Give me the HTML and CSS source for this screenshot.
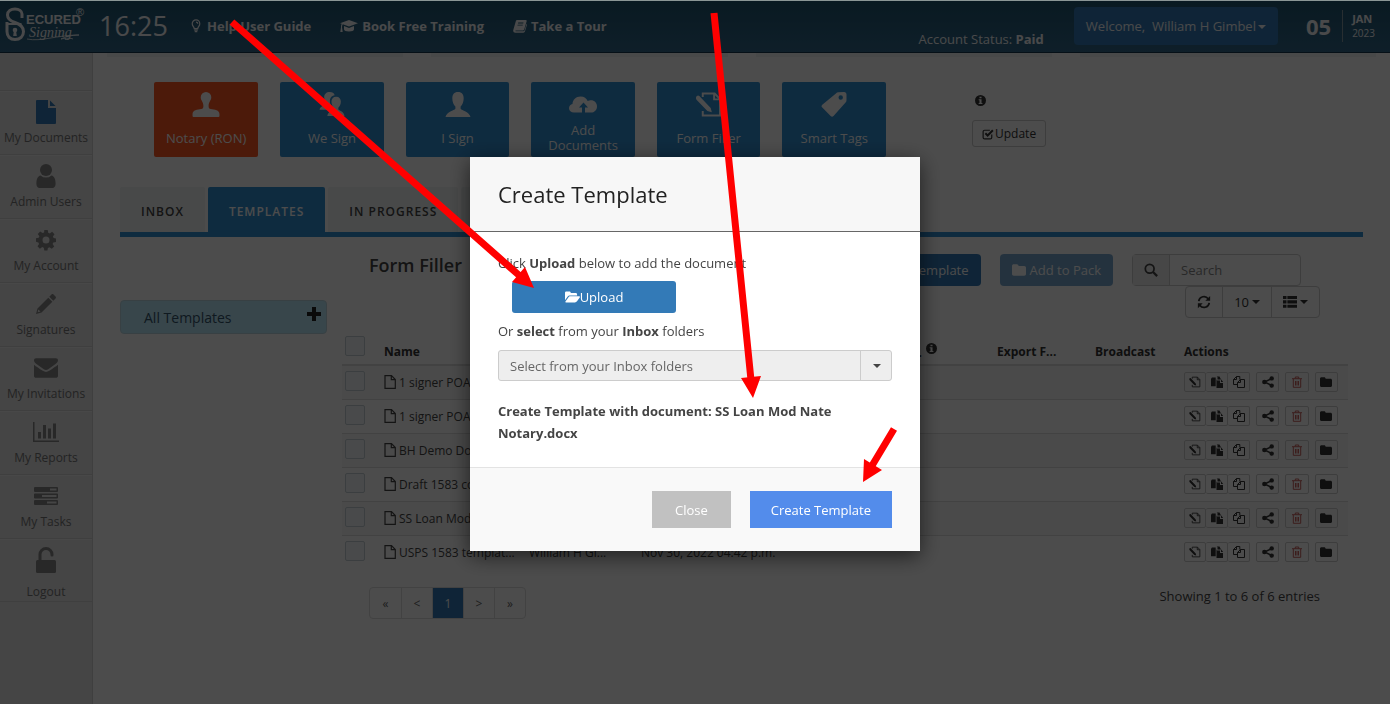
FILE: index.html
```html
<!DOCTYPE html>
<html lang="en">
<head>
  <meta charset="UTF-8" />
  <title>Secured Signing - Form Filler</title>
  <link rel="stylesheet" href="styles.css">
</head>
<body>

  <!-- icon sprite -->
  <svg class="sprite" aria-hidden="true">
    <symbol id="i-bulb" viewBox="0 0 16 16"><path d="M6 11c0-2-2.300-2.800-2.300-5.700a4.300 4.300 0 0 1 8.600 0C12.300 8.200 10 9 10 11zM6 12.700h4M6.500 14.500h3M8 3.500c1.300 0 2 .7 2 1.800" fill="none" stroke="currentColor" stroke-width="1.400"/></symbol>
    <symbol id="i-cap" viewBox="0 0 18 16"><path d="M9 2l9 3.200-9 3.300L2.800 6.200c-.6.700-.8 1.700-.8 3l.7 4.800H.3L1 9.200c0-1.600.2-2.700.8-3.500L0 5.200z"/><path d="M4 8l5 1.900L14 8v3.200c0 1.300-2.200 2.300-5 2.300s-5-1-5-2.300z"/></symbol>
    <symbol id="i-book" viewBox="0 0 16 16"><path d="M5 1h9.500c1 0 1.400.7 1.100 1.600l-2.800 9.300c-.3.800-.8 1.100-1.600 1.100H3.400c-1 0-1.200.8-.2 1.100h8.800c.7 0 1-.3 1.200-.9l2.300-7.700c.5.400.5.900.3 1.600l-2.100 7c-.3 1-.9 1.500-1.900 1.500H2.700C.9 15.600-.2 14 .4 12.400L3.200 2.500C3.500 1.500 4 1 5 1zm1 3l-.3 1h6l.3-1zm-.7 2.500L5 7.500h6l.3-1z" fill-rule="evenodd"/></symbol>
    <symbol id="i-file" viewBox="0 0 20 24"><path d="M1 0h11v8h8v15a1 1 0 0 1-1 1H1a1 1 0 0 1-1-1V1a1 1 0 0 1 1-1z"/><path d="M14 .5L19.500 6H14z"/></symbol>
    <symbol id="i-user" viewBox="0 0 16 20"><circle cx="8" cy="5" r="5"/><path d="M3.500 9.500a6.500 6.500 0 0 0 9 0C15 10 16 12.500 16 16.500c0 2-1 3.500-2.800 3.500H2.800C1 20 0 18.500 0 16.500c0-4 1-6.500 3.500-7z"/></symbol>
    <symbol id="i-cog" viewBox="0 0 20 20"><path fill-rule="evenodd" d="M8.300 0h3.400l.5 2.700 1.600.7L16.100 1.800l2.400 2.400-1.600 2.300.7 1.600 2.400.5v3.400l-2.700.5-.7 1.600 1.600 2.300-2.400 2.400-2.300-1.600-1.600.7-.5 2.600H8.300l-.5-2.700-1.600-.7-2.300 1.600-2.400-2.400 1.600-2.300-.7-1.600L0 11.700V8.300l2.700-.5.700-1.600L1.800 3.900l2.400-2.400 2.300 1.600 1.600-.7zM10 6.500a3.500 3.500 0 1 0 0 7 3.500 3.500 0 0 0 0-7z"/></symbol>
    <symbol id="i-pencil" viewBox="0 0 20 20"><path d="M15.500.5c.6-.6 1.400-.6 2 0l2 2c.6.600.6 1.400 0 2L17.300 6.700l-4-4zM12.300 3.700l4 4L5.500 18.500 0 20l1.500-5.500zM2.300 15.500l-.6 2.800 2.800-.7z" fill-rule="evenodd"/></symbol>
    <symbol id="i-mail" viewBox="0 0 22 18"><path d="M2 0h18c1.200 0 2 .8 2 2 0 1.400-1 2.400-2 3.200l-7 4.900c-1.500 1-2.500 1-4 0L2 5.200C1 4.500 0 3.400 0 2 0 .8.800 0 2 0z"/><path d="M0 6c.5.500 1 1 8 5.600 2 1.300 4 1.300 6 0C21 7 21.500 6.500 22 6v10c0 1.200-.8 2-2 2H2c-1.200 0-2-.8-2-2z"/></symbol>
    <symbol id="i-chart" viewBox="0 0 26 20"><path d="M0 0h1.500v18.500H26V20H0zM5 10h3v6.500H5zM10 3h3v13.500h-3zM15 6.500h3v10h-3zM20 1.500h3v15h-3z"/></symbol>
    <symbol id="i-tasks" viewBox="0 0 24 18"><path fill-rule="evenodd" d="M1 0h22a1 1 0 0 1 1 1v3a1 1 0 0 1-1 1H1a1 1 0 0 1-1-1V1a1 1 0 0 1 1-1zm15 1.500v2h6.500v-2zM1 6.500h22a1 1 0 0 1 1 1v3a1 1 0 0 1-1 1H1a1 1 0 0 1-1-1v-3a1 1 0 0 1 1-1zM8 8v2h14.500V8zM1 13h22a1 1 0 0 1 1 1v3a1 1 0 0 1-1 1H1a1 1 0 0 1-1-1v-3a1 1 0 0 1 1-1zm12 1.500v2h9.500v-2z"/></symbol>
    <symbol id="i-unlock" viewBox="0 0 20 26"><path d="M4 14V7.500a6 6 0 0 1 12 0V8" fill="none" stroke="currentColor" stroke-width="3" stroke-linecap="round"/><rect y="13" width="20" height="13" rx="1.500"/></symbol>
    <symbol id="i-stamp" viewBox="0 0 28 26"><path d="M14 0a5.500 5.500 0 0 1 5.500 5.500c0 3.500-2.800 4.500-2.800 9 0 2 .6 3 2.300 3.300 4 .5 9 1.200 9 5.200v2a1 1 0 0 1-1 1H1a1 1 0 0 1-1-1v-2c0-4 5-4.700 9-5.200 1.700-.3 2.300-1.300 2.300-3.300 0-4.500-2.800-5.500-2.800-9A5.500 5.500 0 0 1 14 0z"/></symbol>
    <symbol id="i-person" viewBox="0 0 22 22"><path d="M11 0c3.500 0 5 2.300 5 5.500 0 3-1 5.800-2.700 7.200v2c1 1.500 7.700 2.600 8.700 7.300H0c1-4.700 7.700-5.800 8.700-7.300v-2C7 11.300 6 8.500 6 5.500 6 2.300 7.500 0 11 0z"/></symbol>
    <symbol id="i-people" viewBox="0 0 24 24"><path d="M10 0c2.300 0 4 1 4.600 3-3.200.4-4.800 3-4.600 6 .1 2 .8 4 1.800 5.300-1 1-4 1.700-5.300 2.700H0c.6-3.600 5-4.200 6.500-5.500v-1.800C5.200 8.500 4.500 6.800 4.500 5 4.500 2 6.500 0 10 0z"/><path d="M16 4.500c3 0 4.500 2 4.500 4.600 0 2.500-1 4.700-2.400 6v1.800c1.300 1.300 5.300 2 5.900 6.100H7.500c.6-4.100 5-4.800 6.300-6.100v-1.800c-1.400-1.300-2.300-3.500-2.300-6 0-2.600 1.500-4.600 4.500-4.600z"/></symbol>
    <symbol id="i-cloud" viewBox="0 0 28 16"><path fill-rule="evenodd" d="M5 16c-3 0-5-2-5-4.300C0 9.500 1.400 8 3.500 7.500 3.500 3.500 7 0 11.500 0c3.700 0 6 1.800 7.200 4.600C19.700 4 20.600 3.800 22 3.800c3.500 0 6 2.600 6 6.100 0 3.400-2.600 6.100-6 6.100h-6v-5h3l-4.500-5-4.500 5h3v5z"/></symbol>
    <symbol id="i-form" viewBox="0 0 24 22"><path d="M6.500 4.500V1.300H17l4.700 4.900v14.500H6.500v-4M16.500 1.500v5h5" fill="none" stroke="currentColor" stroke-width="1.700"/><path d="M1.300 3.600c.7-.7 1.500-.7 2.200 0L13.500 14l1 3.800-3.900-1L1 6.800c-.7-.8-.6-2.300.3-3.200z"/></symbol>
    <symbol id="i-tag" viewBox="0 0 26 26"><path fill-rule="evenodd" d="M15 1.500c.7-.8 1.500-1.200 2.500-1.200l6-.3c1.500 0 2.500 1 2.500 2.500v6c0 1-.4 2-1.200 2.800L12.500 25c-1 1-2 1-3 0L.8 16.200c-1-1-1-2 0-3zM20 3.500a2.300 2.300 0 1 0 0 4.600 2.300 2.300 0 0 0 0-4.600z"/></symbol>
    <symbol id="i-info" viewBox="0 0 16 16"><path fill-rule="evenodd" d="M8 0a8 8 0 1 1 0 16A8 8 0 0 1 8 0zM6.500 2.500v2.300h3V2.500zM5.300 6v1.500h1.200v4H5.300V13h5.500v-1.500H9.500V6z"/></symbol>
    <symbol id="i-check" viewBox="0 0 16 16"><path d="M13 8.500v4a2 2 0 0 1-2 2H3.500a2 2 0 0 1-2-2V5a2 2 0 0 1 2-2h7" fill="none" stroke="currentColor" stroke-width="1.600"/><path d="M4.500 7l3 3L14.500 3" fill="none" stroke="currentColor" stroke-width="2.600"/></symbol>
    <symbol id="i-open" viewBox="0 0 18 14"><path d="M0 11V2C0 .8.800.300 1.700.300h3.600c1 0 1.700.7 1.700 1.900h5.800c1 0 1.700.7 1.700 1.700v1.300H6C4.600 5.200 3.700 5.700 3 6.600z"/><path d="M6 6.200h11c1 0 1.200.6.700 1.300l-3.300 4.700c-.6.800-1.500 1.300-2.500 1.300H1.300c-1 0-1.200-.6-.7-1.200L4 7.500c.5-.8 1.200-1.300 2-1.300z"/></symbol>
    <symbol id="i-folder" viewBox="0 0 16 14"><path d="M0 11.500v-9C0 1.200.900.500 2 .5h3.500c1.200 0 2 .8 2 2H14c1.200 0 2 .8 2 2v7c0 1.200-.8 2-2 2H2c-1.200 0-2-.8-2-2z"/></symbol>
    <symbol id="i-search" viewBox="0 0 16 16"><circle cx="6.500" cy="6.500" r="5" fill="none" stroke="currentColor" stroke-width="2"/><path d="M10.300 10.300l4.700 4.700" stroke="currentColor" stroke-width="2.600"/></symbol>
    <symbol id="i-refresh" viewBox="0 0 16 16"><path d="M2 7a6 6 0 0 1 10.800-2.700M14 9a6 6 0 0 1-10.800 2.700" fill="none" stroke="currentColor" stroke-width="2"/><path d="M15 1v5.500H9.500zM1 15V9.500h5.500z"/></symbol>
    <symbol id="i-list" viewBox="0 0 16 14"><path d="M0 0h4v3.600H0zM5 0h11v3.600H5zM0 5h4v3.600H0zM5 5h11v3.600H5zM0 10h4v3.600H0zM5 10h11v3.600H5z"/></symbol>
    <symbol id="i-share" viewBox="0 0 12 12"><path d="M10 2.300L2.500 6 10 9.700" fill="none" stroke="currentColor" stroke-width="1.500"/><circle cx="9.700" cy="2.400" r="2.200"/><circle cx="2.400" cy="6" r="2.300"/><circle cx="9.700" cy="9.600" r="2.200"/></symbol>
    <symbol id="i-trash" viewBox="0 0 12 12"><path d="M1 2.700h10M2.300 3v8.300h7.400V3M4.300 2.500V1h3.400v1.500M4.500 5v4.500M6 5v4.500M7.500 5v4.500" fill="none" stroke="currentColor"/></symbol>
    <symbol id="i-paste" viewBox="0 0 12 12"><path d="M0 2.500L1 1.500h3.700v8.800H0z"/><path d="M5.500 0h1v3.500H10L8.500.5H7zM5.500 3L6 4.500h3V7h3v5H5.500zM10 3.200L12.300 6H10z"/></symbol>
    <symbol id="i-copy" viewBox="0 0 12 12"><path d="M4.500 8.500h-4v-5l3-3h3.300v3M3.500.5v3h-3M7.500 3.500h4v8h-7v-5zM7.500 3.500v3h-3" fill="none" stroke="currentColor"/></symbol>
    <symbol id="i-page" viewBox="0 0 12 14"><path d="M1 .7h6.500L11.300 4.500v8.800H1zM7.300.7v4h4" fill="none" stroke="currentColor" stroke-width="1.200"/></symbol>
    <symbol id="i-plus" viewBox="0 0 14 14"><path d="M5 0h4v5h5v4H9v5H5V9H0V5h5z"/></symbol>
  </svg>

  <header class="topbar">
    <a class="logo" href="#" aria-label="Secured Signing">
      <svg viewBox="0 0 80 38">
        <path d="M17 11V7c0-3-3-5-7-5S2.500 4 2.500 8s3 6 7.500 7.500 8.500 4 8.500 9-3.500 8-8.500 8-8-3-8-8V15" fill="none" stroke="currentColor" stroke-width="3"/>
        <path d="M2.500 17h14" stroke="currentColor" stroke-width="2"/>
        <circle cx="10" cy="23" r="2.300"/><path d="M9 23h2l.8 6H8.200z"/>
        <text class="logo-name" x="21" y="17">ECURED</text>
        <text class="logo-script" x="24" y="30">Signing</text>
        <text class="logo-reg" x="71" y="9">®</text>
        <path d="M22 32c14 3 30-4 52-4-8 0-14 2-18 4 5-1 10-1 12 0" fill="none" stroke="currentColor" stroke-width=".8"/>
      </svg>
    </a>
    <div class="clock">16:25</div>
    <nav class="toplinks">
      <a href="#"><svg class="ic14"><use href="#i-bulb"/></svg>Help User Guide</a>
      <a href="#"><svg class="ic18"><use href="#i-cap"/></svg>Book Free Training</a>
      <a href="#"><svg class="ic14"><use href="#i-book"/></svg>Take a Tour</a>
    </nav>
    <div class="status">Account Status: <b>Paid</b></div>
    <button class="welcome">Welcome,&nbsp; William H Gimbel<span class="caret"></span></button>
    <div class="date">
      <span class="day">05</span>
      <span class="month"><b>JAN</b><span>2023</span></span>
    </div>
  </header>

  <div class="layout">
    <nav class="sidebar">
      <a class="current" href="#"><svg class="w20"><use href="#i-file"/></svg>My Documents</a>
      <a href="#"><svg class="w20"><use href="#i-user"/></svg>Admin Users</a>
      <a href="#"><svg class="w20"><use href="#i-cog"/></svg>My Account</a>
      <a href="#"><svg class="w20"><use href="#i-pencil"/></svg>Signatures</a>
      <a href="#"><svg class="w24"><use href="#i-mail"/></svg>My Invitations</a>
      <a href="#"><svg class="w26"><use href="#i-chart"/></svg>My Reports</a>
      <a href="#"><svg class="w24"><use href="#i-tasks"/></svg>My Tasks</a>
      <a class="logout" href="#"><svg class="w26"><use href="#i-unlock"/></svg>Logout</a>
    </nav>

    <main class="main">
      <div class="strips"><span></span><span></span><span></span><span></span></div>

      <div class="launch">
        <div class="tiles">
          <button class="tile notary"><svg><use href="#i-stamp"/></svg><span>Notary (RON)</span></button>
          <button class="tile"><svg><use href="#i-people"/></svg><span>We Sign</span></button>
          <button class="tile"><svg><use href="#i-person"/></svg><span>I Sign</span></button>
          <button class="tile"><svg><use href="#i-cloud"/></svg><span>Add Documents</span></button>
          <button class="tile"><svg><use href="#i-form"/></svg><span>Form Filler</span></button>
          <button class="tile"><svg><use href="#i-tag"/></svg><span>Smart Tags</span></button>
        </div>
        <div class="update">
          <svg class="ic10"><use href="#i-info"/></svg>
          <button class="btn-small"><svg class="ic12"><use href="#i-check"/></svg>Update</button>
        </div>
      </div>

      <div class="tabs">
        <button>INBOX</button>
        <button class="active">TEMPLATES</button>
        <button>IN PROGRESS</button>
        <button>COMPLETED</button>
      </div>

      <div class="content">
        <aside class="folders">
          <a href="#">All Templates</a>
          <button aria-label="Add folder"><svg class="ic14"><use href="#i-plus"/></svg></button>
        </aside>

        <section class="panel">
          <div class="toolbar">
            <h2>Form Filler</h2>
            <button class="btn">Create Template</button>
            <button class="btn" disabled><svg class="ic14"><use href="#i-folder"/></svg>Add to Pack</button>
            <div class="search">
              <label for="search"><svg class="ic14"><use href="#i-search"/></svg></label>
              <input id="search" type="text" placeholder="Search">
            </div>
          </div>
          <div class="viewopts">
            <button aria-label="Refresh"><svg class="ic14"><use href="#i-refresh"/></svg></button>
            <button>10<span class="caret"></span></button>
            <button aria-label="Columns"><svg class="ic14"><use href="#i-list"/></svg><span class="caret"></span></button>
          </div>

          <table>
            <thead>
              <tr>
                <th class="c-check"><input type="checkbox" aria-label="Select all"></th>
                <th class="c-name">Name</th>
                <th class="c-owner">Owner</th>
                <th class="c-date">Created</th>
                <th class="c-link">Form L...<svg class="ic10"><use href="#i-info"/></svg></th>
                <th class="c-export">Export F...</th>
                <th class="c-cast">Broadcast</th>
                <th class="c-actions">Actions</th>
              </tr>
            </thead>
            <tbody id="rows"></tbody>
          </table>

          <div class="tablefoot">
            <div class="pages">
              <a href="#">«</a><a href="#">&lt;</a><a class="active" href="#">1</a><a href="#">&gt;</a><a href="#">»</a>
            </div>
            <div class="count">Showing 1 to 6 of 6 entries</div>
          </div>
        </section>
      </div>
    </main>
  </div>

  <div class="backdrop">
    <div class="modal" role="dialog" aria-labelledby="modal-title">
      <div class="modal-head"><h3 id="modal-title">Create Template</h3></div>
      <div class="modal-body">
        <p>Click <b>Upload</b> below to add the document</p>
        <button class="upload"><svg><use href="#i-open"/></svg>Upload</button>
        <p><label for="inbox">Or <b>select</b> from your <b>Inbox</b> folders</label></p>
        <div class="picker">
          <select id="inbox"><option>Select from your Inbox folders</option></select>
          <span class="picker-arrow"><span class="caret"></span></span>
        </div>
        <p class="chosen">Create Template with document: SS Loan Mod Nate Notary.docx</p>
      </div>
      <div class="modal-foot">
        <button class="close">Close</button>
        <button class="create">Create Template</button>
      </div>
    </div>
  </div>

  <!-- guide arrows -->
  <svg class="arrows" viewBox="0 0 1390 704" aria-hidden="true">
    <path class="shaft" d="M232 22L521 277M714 13L751 380M894 429L870 469"/>
    <path d="M534 288l-22-6 13-15zM753 398l-12-20 20-2zM863 482l1-23 18 11z"/>
  </svg>

  <script>
    const docs = [
      { name: '1 signer POA', owner: '', date: '' },
      { name: '1 signer POA', owner: '', date: '' },
      { name: 'BH Demo Doc', owner: '', date: '' },
      { name: 'Draft 1583 co', owner: '', date: '' },
      { name: 'SS Loan Mod', owner: '', date: '' },
      { name: 'USPS 1583 templat...', owner: 'William H Gi...', date: 'Nov 30, 2022 04:42 p.m.' }
    ];

    const action = (icon, label, cls = '') =>
      `<button class="${cls}" aria-label="${label}"><svg class="ic12"><use href="#i-${icon}"/></svg></button>`;

    document.getElementById('rows').innerHTML = docs.map(d => `
      <tr>
        <td class="c-check"><input type="checkbox" aria-label="Select ${d.name}"></td>
        <td class="c-name"><svg class="page"><use href="#i-page"/></svg>${d.name}</td>
        <td>${d.owner}</td>
        <td>${d.date}</td>
        <td></td><td></td><td></td>
        <td>
          <div class="actions">
            <div class="group">${action('form', 'Edit')}${action('paste', 'Use')}${action('copy', 'Copy')}</div>
            ${action('share', 'Share')}${action('trash', 'Delete', 'danger')}${action('folder', 'Move')}
          </div>
        </td>
      </tr>`).join('');
  </script>

</body>
</html>
```

FILE: styles.css
```css
* { box-sizing: border-box; }
html, body { height: 100%; }
body {
  margin: 0;
  border-top: 1px solid #8b9696;
  background: #fff; color: #444;
  font-family: "Open Sans", "Noto Sans", sans-serif;
  font-size: 13px;
  display: flex; flex-direction: column;
  overflow: hidden;
}
button, input, select { font: inherit; color: inherit; margin: 0; padding: 0; }
button { background: none; border: 0; cursor: pointer; }
a { color: inherit; text-decoration: none; }
svg { fill: currentColor; flex: none; }
.sprite { position: absolute; width: 0; height: 0; }
.ic10 { width: 11px; height: 11px; }
.ic12 { width: 12px; height: 12px; }
.ic14 { width: 14px; height: 14px; }
.ic18 { width: 18px; height: 16px; }
.caret {
  display: inline-block; margin-left: 2px; vertical-align: middle;
  border: 4px solid transparent; border-top-color: currentColor; border-bottom: 0;
}

/* top bar */
.topbar {
  height: 52px; flex: none;
  display: flex; align-items: center;
  padding: 0 15px 2px 5px;
  background: linear-gradient(#205672, #32688a);
  border-bottom: 1px solid #14384e;
  color: #f4f6f8;
}
.logo { width: 80px; height: 38px; }
.logo svg { width: 80px; height: 38px; display: block; }
.logo-name { font: bold 13px "Liberation Sans", sans-serif; }
.logo-script { font: italic 14px "Liberation Serif", serif; }
.logo-reg { font: 11px "Liberation Sans", sans-serif; }
.clock { margin-left: 14px; width: 70px; font-size: 27px; }
.toplinks { display: flex; gap: 29px; margin-left: 20px; font-weight: 700; }
.toplinks a { display: flex; align-items: center; gap: 4px; white-space: nowrap; }
.status { margin: 26px 30px 0 auto; white-space: nowrap; }
.welcome {
  height: 38px; padding: 0 12px; border-radius: 4px;
  background: #337ab7; white-space: nowrap;
}
.date { display: flex; align-items: center; margin-left: 28px; }
.day { font-size: 22px; font-weight: 700; }
.month {
  display: flex; flex-direction: column; justify-content: center;
  height: 32px; margin-left: 11px; padding-left: 9px;
  border-left: 1px solid #8899a3;
  font-size: 10px; line-height: 15px;
}
.month b { font-size: 11px; }

.layout { flex: 1; display: flex; min-height: 0; }

/* sidebar */
.sidebar {
  width: 93px; flex: none; padding-top: 37px;
  background: #e6e6e6; border-right: 1px solid #d2d2d2;
  color: #777; font-size: 12px;
}
.sidebar a {
  height: 64px; padding-top: 9px;
  display: flex; flex-direction: column; align-items: center; gap: 4px;
  border-top: 1px solid #d4d4d4; box-shadow: inset 0 1px #f0f0f0;
  white-space: nowrap; line-height: 20px;
}
.sidebar svg { height: 24px; color: #858585; }
.sidebar .current svg { color: #337ab7; }
.sidebar .logout { border-bottom: 1px solid #d4d4d4; padding-top: 8px; gap: 9px; }
.sidebar .logout svg { height: 26px; }
.w20 { width: 20px; }
.w24 { width: 24px; }
.w26 { width: 26px; }

/* main */
.main { flex: 1; min-width: 0; }
.strips { display: grid; grid-template-columns: repeat(4, 1fr); gap: 28px; padding: 0 14px; height: 4px; }
.strips span { background: #f0f4f4; }
.launch { display: flex; padding: 25px 28px 0 61px; }
.tiles { flex: 0 1 732px; display: grid; grid-template-columns: repeat(6, 1fr); gap: 22px; }
.tile {
  height: 75px; border-radius: 2px;
  background: #318fd3; color: #fff;
  display: flex; flex-direction: column; align-items: center; justify-content: space-between;
  padding: 10px 12px 4px; line-height: 15px;
}
.tile svg { width: 28px; height: 25px; }
.tile span { min-height: 30px; display: flex; align-items: center; white-space: nowrap; }
.tile:nth-child(4) span { white-space: normal; }
.notary { background: #ff5722; }
.update { margin-left: 86px; padding-top: 13px; color: #333; }
.update > svg { display: block; margin: 0 0 14px 3px; }
.btn-small {
  height: 27px; padding: 0 9px;
  display: flex; align-items: center; gap: 1px;
  border: 1px solid #ccc; border-radius: 3px; font-size: 12px;
}

.tabs { display: flex; gap: 3px; margin: 30px 27px 0; border-bottom: 5px solid #318fd3; }
.tabs button {
  height: 45px; padding: 3px 21px 0; border-radius: 2px 2px 0 0;
  background: #f0f4f4; color: #444;
  font-size: 12px; font-weight: 600; letter-spacing: 1px;
}
.tabs .active { background: #318fd3; color: #fff; }

.content { display: flex; margin: 17px 27px 0; }
.folders {
  width: 207px; height: 34px; flex: none; margin: 46px 15px 0 0; padding: 0 5px 0 23px;
  display: flex; align-items: center; justify-content: space-between;
  background: #bdeafb; border: 1px solid #bcd8e2; border-radius: 4px;
  color: #33546b; font-size: 14px;
}
.folders button { color: #222; padding-bottom: 4px; }
.panel { flex: 1; min-width: 0; }

.toolbar { display: flex; padding: 0 62px 0 27px; }
.toolbar h2 { margin: 0 auto 0 0; font-size: 18px; font-weight: 600; line-height: 22px; }
.btn {
  height: 32px; margin-right: 19px; padding: 0 12px;
  display: flex; align-items: center; gap: 4px;
  background: #337ab7; border-radius: 4px; color: #fff; white-space: nowrap;
}
.btn:disabled { opacity: .65; }
.search { display: flex; width: 169px; height: 32px; border: 1px solid #ccc; border-radius: 4px; }
.search label {
  width: 37px; flex: none; display: flex; align-items: center; justify-content: center;
  background: #eee; border-right: 1px solid #ccc; color: #444;
}
.search input { flex: 1; min-width: 0; padding: 0 11px; border: 0; background: none; }
.search input::placeholder { color: #888; }
.viewopts { display: flex; width: fit-content; height: 32px; margin: 0 43px 18px auto; border: 1px solid #ccc; border-radius: 4px; color: #333; }
.viewopts button { display: flex; align-items: center; padding: 0 11px; gap: 1px; }
.viewopts button + button { border-left: 1px solid #ccc; }

table { width: calc(100% - 15px); table-layout: fixed; border-collapse: collapse; }
th, td { padding: 0 10px; text-align: left; white-space: nowrap; }
th { height: 28px; padding-top: 3px; color: #333; font-weight: 700; font-size: 12px; border-bottom: 2px solid #ddd; }
td { height: 34px; border-top: 1px solid #ddd; font-size: 12px; }
tbody tr:nth-child(odd) { background: #f8f8f8; }
.c-check { width: 32px; padding: 0 3px; }
th.c-check { padding-bottom: 8px; }
.c-name { width: 145px; }
td.c-name { padding-right: 0; }
.c-owner { width: 112px; }
.c-link { width: 156px; padding-right: 50px; text-align: right; }
.c-link svg { margin: 0 0 3px 4px; }
.c-export { width: 98px; }
.c-cast { width: 89px; }
.c-actions { width: 174px; }
table input {
  appearance: none; display: block; width: 20px; height: 20px;
  border: 1px solid #c5d0d5; border-radius: 2px; background: #f4f8fa;
}
td input { margin-bottom: 2px; }
.page { width: 12px; height: 14px; margin-right: 3px; vertical-align: -2px; color: #444; }
.actions { display: flex; gap: 6px; color: #333; }
.actions button { width: 25px; height: 20px; display: flex; align-items: center; justify-content: center; border: 1px solid #ccc; border-radius: 2px; }
.actions .group { display: flex; width: 66px; }
.actions .group button + button { border-left: 0; }
.actions .danger { color: #c8625e; }

.tablefoot { display: flex; justify-content: space-between; padding: 18px 43px 0 27px; }
.pages { display: flex; height: 32px; border: 1px solid #ddd; border-radius: 4px; font-size: 12px; }
.pages a { width: 31px; display: flex; align-items: center; justify-content: center; color: #666; }
.pages a + a { border-left: 1px solid #ddd; }
.pages .active { background: #337ab7; color: #fff; }

/* modal */
.backdrop {
  position: fixed; inset: 1px 0 0 0; padding-top: 156px;
  display: flex; justify-content: center; align-items: flex-start;
  background: rgba(0,0,0,.7);
}
.modal { width: 450px; background: #fff; color: #444; box-shadow: 0 5px 20px rgba(0,0,0,.6); }
.modal-head { height: 75px; padding: 0 28px; display: flex; align-items: center; background: #f7f7f7; border-bottom: 1px solid #666; }
.modal-head h3 { margin: 0; font-size: 22px; font-weight: 500; color: #222; }
.modal-body { padding: 21px 28px 23px; line-height: 20px; }
.modal-body p { margin: 0; }
.modal-body b, .chosen { font-weight: 700; }
.upload {
  width: 164px; height: 32px; margin: 8px 0 8px 14px; border-radius: 3px;
  display: flex; align-items: center; justify-content: center;
  background: #337ab7; color: #fff;
}
.upload svg { width: 15px; height: 12px; }
.picker { display: flex; height: 31px; margin: 9px 0 19px; border: 1px solid #ccc; border-radius: 3px; background: #eee; }
.picker select { flex: 1; appearance: none; border: 0; padding: 0 11px; background: none; color: #666; }
.picker-arrow { width: 31px; display: flex; align-items: center; justify-content: center; border-left: 1px solid #ccc; }
.modal-body .chosen { line-height: 22px; }
.modal-foot {
  height: 84px; padding: 0 28px; display: flex; align-items: center; justify-content: flex-end; gap: 19px;
  background: #f9f9f9; border-top: 1px solid #e3e3e3;
}
.modal-foot button { height: 37px; padding: 0 21px; color: #fff; }
.modal-foot .close { padding: 0 23px; background: #c1c1c1; }
.create { background: #538ceb; }

/* arrows */
.arrows { position: fixed; top: 0; left: 0; width: 100%; height: 100%; fill: #f00; pointer-events: none; }
.shaft { fill: none; stroke: #f00; stroke-width: 7px; }
```
